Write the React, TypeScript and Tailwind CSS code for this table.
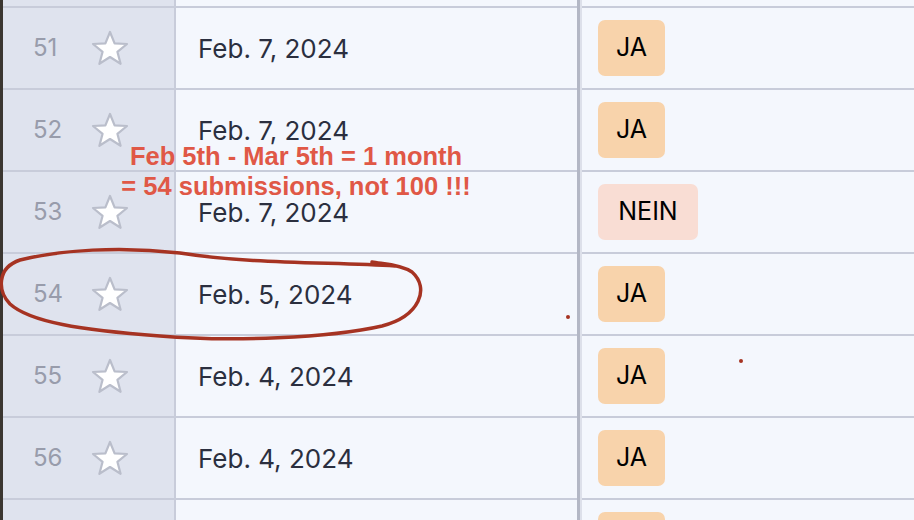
import { Fragment } from 'react';

type Row = { n: number; date: string; answer: 'JA' | 'NEIN' | '' };

const rows: Row[] = [
  { n: 51, date: 'Feb. 7, 2024', answer: 'JA' },
  { n: 52, date: 'Feb. 7, 2024', answer: 'JA' },
  { n: 53, date: 'Feb. 7, 2024', answer: 'NEIN' },
  { n: 54, date: 'Feb. 5, 2024', answer: 'JA' },
  { n: 55, date: 'Feb. 4, 2024', answer: 'JA' },
  { n: 56, date: 'Feb. 4, 2024', answer: 'JA' },
];

function Star() {
  return (
    <svg width="38" height="36" viewBox="0 0 38 36" fill="none">
      <polygon
        points="19,2 23.6,13.4 36,14 26.4,21.8 29.6,33.8 19,27 8.4,33.8 11.6,21.8 2,14 14.4,13.4"
        fill="#ffffff"
        stroke="#babecb"
        strokeWidth="2.2"
        strokeLinejoin="round"
      />
    </svg>
  );
}

function Badge({ answer }: { answer: Row['answer'] }) {
  const no = answer === 'NEIN';
  return (
    <span
      className={`inline-flex h-[56px] items-center justify-center rounded-[7px] text-[25px] text-black ${
        no ? 'w-[100px] bg-[#f9ddd4]' : 'w-[67px] bg-[#f8d3ab]'
      }`}
    >
      {answer}
    </span>
  );
}

function Line() {
  return (
    <div className="flex h-[2px] shrink-0">
      <div className="w-[171px] bg-[#c8ccda]" />
      <div className="w-[2px] bg-[#c8ccda]" />
      <div className="w-[401px] bg-[#c8ccda]" />
      <div className="w-[3px] bg-[#b3b7c5]" />
      <div className="w-[2px] bg-[#dde0ea]" />
      <div className="flex-1 bg-[#c8ccda]" />
    </div>
  );
}

function Cells({ row, height, badge = !!row }: { row?: Row; height: number; badge?: boolean }) {
  return (
    <div className="flex shrink-0" style={{ height }}>
      <div className="flex w-[171px] items-center bg-[#dfe3ee]">
        {row && (
          <>
            <span className="ml-[30px] w-[32px] text-[24px] text-[#989cab]">{row.n}</span>
            <span className="ml-[26px] flex items-center">
              <Star />
            </span>
          </>
        )}
      </div>
      <div className="w-[2px] bg-[#c8ccda]" />
      <div className="flex w-[401px] items-center bg-[#f4f7fd] pl-[22px] text-[26px] text-[#2b2f3f]">
        {row?.date}
      </div>
      <div className="w-[3px] bg-[#b3b7c5]" />
      <div className="w-[2px] bg-[#dde0ea]" />
      <div className="flex flex-1 items-start bg-[#f4f7fd] pl-[16px] pt-[12px]">
        {badge && <Badge answer={row?.answer ?? ''} />}
      </div>
    </div>
  );
}

export default function App() {
  return (
    <div
      className="relative flex h-[520px] w-[914px] overflow-hidden bg-[#f4f7fd]"
      style={{ fontFamily: 'Inter, "Noto Sans", sans-serif' }}
    >
      <div className="w-[3px] shrink-0 bg-[#3b3631]" />
      <div className="flex flex-1 flex-col">
        <Cells height={6} />
        {rows.map((r) => (
          <Fragment key={r.n}>
            <Line />
            <Cells row={r} height={80} />
          </Fragment>
        ))}
        <Line />
        {/* next row, only its badge top shows above the fold */}
        <Cells height={80} badge />
      </div>

      {/* hand-written annotation */}
      <div
        className="pointer-events-none absolute left-[96px] top-[141px] w-[400px] text-center text-[25.5px] font-bold leading-[30px] text-[#e05846]"
        style={{ fontFamily: '"Liberation Sans", Arial, sans-serif' }}
      >
        <div>Feb 5th - Mar 5th = 1 month</div>
        <div>= 54 submissions, not 100 !!!</div>
      </div>

      <svg
        className="pointer-events-none absolute left-0 top-0"
        width="914"
        height="520"
        viewBox="0 0 914 520"
        fill="none"
      >
        <path
          d="M395 266 C330 262 250 264 180 253 C120 246 60 250 20 260 C-4 268 -2 292 10 304 C30 322 80 330 160 336 C230 342 330 338 382 326 C420 316 430 288 412 272 C400 264 382 264 372 262"
          stroke="#a63322"
          strokeWidth="3.5"
          strokeLinecap="round"
          strokeLinejoin="round"
        />
        <circle cx="568" cy="317" r="2" fill="#a63322" />
        <circle cx="741" cy="361" r="2" fill="#a63322" />
      </svg>
    </div>
  );
}
